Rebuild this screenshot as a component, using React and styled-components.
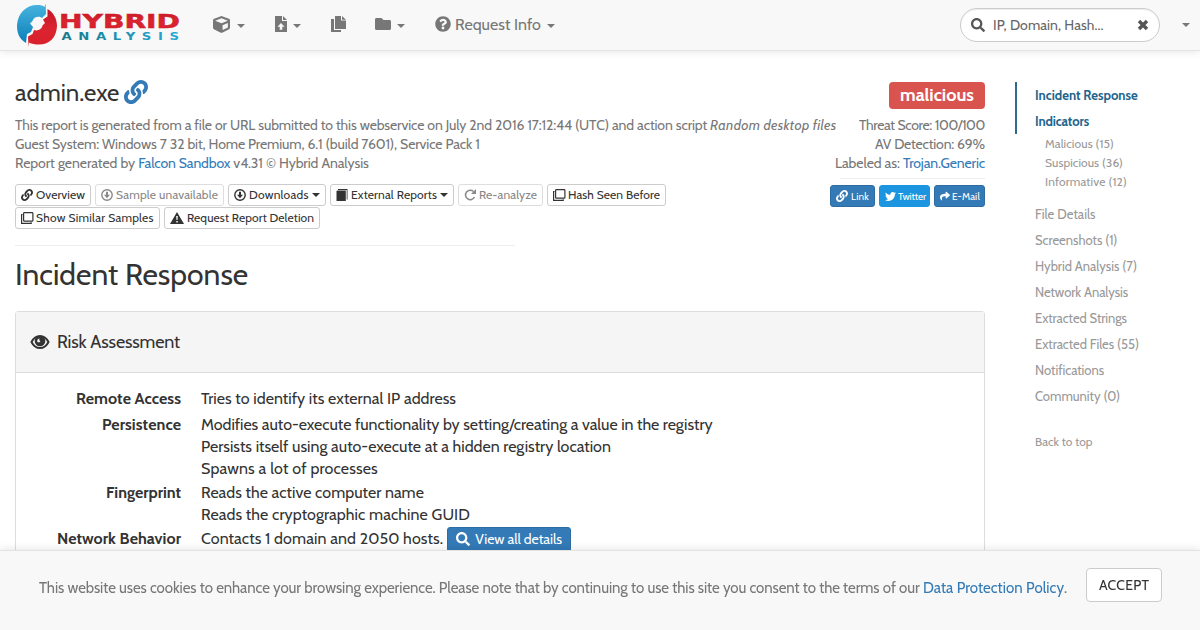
import React from 'react';
import styled, { createGlobalStyle, css } from 'styled-components';
import { FaCube, FaFolder, FaLink, FaQuestionCircle, FaSearch, FaTwitter, FaShare } from 'react-icons/fa';

const GlobalStyle = createGlobalStyle`
  * {
    box-sizing: border-box;
  }

  body {
    margin: 0;
    background: #fff;
    color: #333;
    font-family: Cabin, Lato, "Liberation Sans", sans-serif;
    font-size: 14px;
  }

  svg {
    display: block;
    flex: none;
  }
`;

const Text = styled.span`
  letter-spacing: ${props => props.$track || 0}px;
  white-space: nowrap;
`;

const Link = styled.a`
  color: #337ab7;
  letter-spacing: ${props => props.$track || 0}px;
  text-decoration: none;
  white-space: nowrap;
`;

const Caret = styled.span`
  width: 0;
  height: 0;
  border-top: 4px solid currentColor;
  border-left: 4px solid transparent;
  border-right: 4px solid transparent;
`;

/* ---------- Navbar ---------- */

const Navbar = styled.nav`
  display: flex;
  align-items: center;
  height: 51px;
  padding: 0 10px 0 15px;
  background: #f8f8f8;
  border-bottom: 1px solid #e3e3e3;
  box-shadow: 0 1px 8px rgba(0, 0, 0, 0.1);
  color: #777;
`;

const NavItems = styled.div`
  display: flex;
  align-items: center;
  flex: 1;
  height: 46px;
  margin: 0 0 2px 30px;
`;

const NavItem = styled.a`
  display: flex;
  align-items: center;
  gap: ${props => props.$gap || 7}px;
  margin-right: ${props => props.$after || 0}px;
  font-size: 16px;

  ${Caret} {
    margin-top: 4px;
  }

  ${Text} + ${Caret} {
    margin-left: 2px;
  }
`;

const SearchBox = styled.div`
  display: flex;
  align-items: center;
  width: 200px;
  height: 34px;
  margin-right: 22px;
  padding: 0 10px;
  background: #fff;
  border: 1px solid #ccc;
  border-radius: 17px;
  box-shadow: inset 0 1px 1px rgba(0, 0, 0, 0.075);
  color: #555;
`;

const SearchHint = styled(Text)`
  flex: 1;
  margin-left: 8px;
  color: #666;
`;

/* ---------- Page ---------- */

const Page = styled.main`
  display: grid;
  grid-template-columns: 970px 155px;
  column-gap: 30px;
  height: 579px;
  padding: 31px 15px 0;
  overflow: hidden;
`;

const Header = styled.header`
  display: flex;
  justify-content: space-between;
  height: 148px;
`;

const Summary = styled.div`
  flex: 1;
  min-width: 0;
`;

const FileName = styled.h2`
  display: flex;
  align-items: center;
  gap: 5px;
  height: 22px;
  margin: 0 0 12px;
  font-size: 24px;
  font-weight: 400;
  line-height: 22px;

  svg {
    margin-top: -2px;
    color: #337ab7;
  }
`;

const Meta = styled.div`
  color: #777;
  line-height: 19px;
  white-space: nowrap;
`;

const Toolbar = styled.div`
  display: flex;
  flex-wrap: wrap;
  gap: 1px 4px;
  width: 700px;
  margin-top: 11px;
`;

const Button = styled.button`
  display: flex;
  align-items: center;
  gap: ${props => props.$gap || 2}px;
  width: ${props => props.$width}px;
  height: 22px;
  padding: 0 5px;
  background: #fff;
  border: 1px solid #ccc;
  border-radius: 3px;
  color: #333;
  font: inherit;
  font-size: 12px;
  line-height: 18px;

  ${Caret} {
    margin-left: ${props => (props.$gap > 2 ? 0 : 1)}px;
  }

  ${props =>
    props.disabled &&
    css`
      border-color: #dedede;
      color: #888;
    `}
`;

const Verdict = styled.div`
  display: flex;
  flex-direction: column;
  align-items: flex-end;
  flex: none;
`;

const Badge = styled.div`
  width: 96px;
  height: 27px;
  margin-bottom: 7px;
  background: #d9534f;
  border-radius: 4px;
  color: #fff;
  font-size: 18px;
  font-weight: 700;
  line-height: 26px;
  text-align: center;
`;

const Divider = styled.div`
  width: ${props => props.$width}px;
  height: 1px;
  margin: ${props => props.$margin || 0};
  background: #eee;
`;

const ShareRow = styled.div`
  display: flex;
  gap: 4px;
`;

const ShareButton = styled(Button)`
  background: ${props => props.$bg || '#337ab7'};
  border-color: ${props => props.$bg || '#2e6da4'};
  color: #fff;
  font-size: 10px;

  ${Text} {
    padding-top: 1px;
  }
`;

const SectionTitle = styled.h1`
  margin: 10px 0 17px;
  font-size: 30px;
  font-weight: 400;
  letter-spacing: 0.04px;
  line-height: 38px;
`;

const Panel = styled.section`
  height: 319px;
  border: 1px solid #ddd;
  border-bottom: 0;
  border-radius: 4px 4px 0 0;
`;

const PanelHeading = styled.div`
  display: flex;
  align-items: center;
  gap: 7px;
  height: 61px;
  padding: 0 14px;
  background: #f5f5f5;
  border-bottom: 1px solid #ddd;
  font-size: 18px;
`;

const Findings = styled.dl`
  display: grid;
  grid-template-columns: 165px 1fr;
  column-gap: 20px;
  margin: 15px 0 0;
  font-size: 16px;
  line-height: 22px;
`;

const Term = styled.dt`
  font-weight: 700;
  text-align: right;
`;

const Detail = styled.dd`
  margin: 0 0 ${props => props.$after}px;

  div {
    display: flex;
    align-items: center;
    height: 22px;
  }
`;

const DetailsButton = styled(Button)`
  height: 25px;
  margin: 1px 0 0 4px;
  padding: 0 8px 2px;
  background: #337ab7;
  border-color: #2e6da4;
  color: #fff;
  font-size: 14px;
`;

/* ---------- Side navigation ---------- */

const SideNav = styled.aside`
  display: flex;
  flex-direction: column;
  color: #999;
  font-size: 13px;
`;

const SideItem = styled(Text)`
  height: 26px;
  padding-left: 20px;
  line-height: 26px;

  ${props =>
    props.$active &&
    css`
      padding-left: 18px;
      border-left: 2px solid #2f6b8f;
      color: #22658c;
      font-weight: 700;
    `}
`;

const SubItems = styled.div`
  display: flex;
  flex-direction: column;
  padding-left: 30px;
  margin-bottom: 10px;
  font-size: 12px;
  line-height: 19px;
`;

const BackToTop = styled(SideItem)`
  margin-top: 20px;
  font-size: 12px;
`;

/* ---------- Cookie notice ---------- */

const CookieBar = styled.footer`
  position: fixed;
  right: 0;
  bottom: 0;
  left: 0;
  display: flex;
  align-items: flex-start;
  height: 80px;
  padding: 17px 38px 0 39px;
  background: #f8f8f8;
  border-top: 1px solid #e3e3e3;
  box-shadow: 0 -1px 8px rgba(0, 0, 0, 0.1);
  color: #777;
  font-size: 15px;
`;

const CookieText = styled.p`
  flex: 1;
  margin: 8px 0 0;
  line-height: 24px;
  white-space: nowrap;
`;

const AcceptButton = styled(Button)`
  justify-content: center;
  height: 34px;
  border-radius: 4px;
  font-size: 14px;
`;

/* ---------- Drawings ---------- */

const Logo = () => (
  <svg width="168" height="48" viewBox="0 0 168 48">
    <defs>
      <linearGradient id="blue" x1="0" y1="0" x2="0" y2="1">
        <stop offset="0" stopColor="#48b4e0" />
        <stop offset="1" stopColor="#0d7fb8" />
      </linearGradient>
      <linearGradient id="red" x1="0" y1="0" x2="0" y2="1">
        <stop offset="0" stopColor="#c41528" />
        <stop offset="0.5" stopColor="#da2430" />
        <stop offset="1" stopColor="#d8202c" />
      </linearGradient>
      <linearGradient id="teal" x1="0" y1="0" x2="1" y2="0">
        <stop offset="0" stopColor="#187a8c" />
        <stop offset="1" stopColor="#25a8d8" />
      </linearGradient>
    </defs>
    <path d="M30.700 2.500L31 13L27 17C24 14.500 18.500 16 17.500 20L15 22.500L18 26L16 31L12 33L11 42C4 38 1.800 31 2 24C3 11 12 4 22 4C26 4 28 4.500 29.500 6Z" fill="url(#blue)" />
    <path d="M32.500 8C39 12 42 18 42 25C41.500 36 35 43.500 24 43.500C20 43.500 17 43 14 41.500L13.500 46L13 35.500L17.500 33L19 29C23 30.500 27 28 27.500 24.500L30 22L28 18.500L32.500 15.500Z" fill="url(#red)" />
    <text x="44" y="27" textLength="121" lengthAdjust="spacingAndGlyphs" fill="url(#red)" stroke="#cf1c2a" strokeWidth="0.500" fontFamily="DejaVu Sans" fontWeight="700" fontSize="19">HYBRID</text>
    <text transform="translate(46.500 38.500) scale(1.350 1)" textLength="87" lengthAdjust="spacing" fill="url(#teal)" fontFamily="DejaVu Sans" fontWeight="700" fontSize="9.800">ANALYSIS</text>
  </svg>
);

const FileUpIcon = () => (
  <svg width="12" height="16" viewBox="0 0 12 16" fill="currentColor">
    <path fillRule="evenodd" d="M0 0H7V5H12V16H0ZM6 7L2.500 10.700H4.700V13.700H7.300V10.700H9.500Z" />
    <path d="M8 0L12 4H8Z" />
  </svg>
);

const CopyIcon = () => (
  <svg width="15" height="16" viewBox="0 0 15 16" fill="currentColor">
    <path d="M4 0H10V4.500H15V13H4Z" />
    <path d="M11 0L15 3.700H11Z" />
    <path d="M0 3H3V14H10V16H0Z" />
  </svg>
);

const DownloadIcon = () => (
  <svg width="12" height="12" viewBox="0 0 12 12">
    <circle cx="6" cy="6" r="5.200" fill="none" stroke="currentColor" strokeWidth="1.400" />
    <path d="M5 2.800H7V5.800H9L6 9.200L3 5.800H5Z" fill="currentColor" />
  </svg>
);

const WindowsIcon = () => (
  <svg width="13" height="12" viewBox="0 0 13 12" fill="none" stroke="currentColor" strokeWidth="1.200">
    <rect x="2.600" y="0.600" width="9.300" height="8.600" rx="0.800" />
    <path d="M1.600 2.500H0.600V11.400H10.200V10.300" />
  </svg>
);

const BookIcon = () => (
  <svg width="12" height="12" viewBox="0 0 12 12" fill="currentColor">
    <path d="M2 0H11.500V10.500H10.700V1H2Z" />
    <path d="M0.500 2L1.500 1.500H9.800V12H0.500Z" />
  </svg>
);

const RedoIcon = () => (
  <svg width="13" height="12" viewBox="0 0 13 12">
    <path d="M9.500 2.500A4.700 4.700 0 1 0 10.500 8" fill="none" stroke="currentColor" strokeWidth="1.500" />
    <path d="M12 0V5H7Z" fill="currentColor" />
  </svg>
);

const WarningIcon = () => (
  <svg width="14" height="12" viewBox="0 0 14 12">
    <path d="M7 0L14 12H0Z" fill="currentColor" />
    <path d="M6.200 4H7.800L7.500 8H6.500ZM6.300 8.900H7.700V10.400H6.300Z" fill="#fff" />
  </svg>
);

const EyeIcon = () => (
  <svg width="20" height="16" viewBox="0 0 20 16">
    <path d="M1.500 8C3.500 4 6.500 1.900 10 1.900S16.500 4 18.500 8C16.500 12 13.500 14.100 10 14.100S3.500 12 1.500 8Z" fill="#f5f5f5" stroke="currentColor" strokeWidth="2" />
    <circle cx="10" cy="7" r="5.300" fill="currentColor" />
    <path d="M7.200 7.200C7.200 5.300 8.300 4.500 9.500 4.500C8.900 5.800 9.500 6.700 10.400 7.400C9.100 8.700 7.200 8.500 7.200 7.200Z" fill="#f5f5f5" />
  </svg>
);

const CrossIcon = () => (
  <svg width="12" height="12" viewBox="0 0 12 12" fill="none" stroke="currentColor" strokeWidth="3.400">
    <path d="M2 2L10 10M10 2L2 10" />
  </svg>
);

/* ---------- Data ---------- */

const actions = [
  { label: 'Overview', width: 76, track: 0.09, icon: <FaLink size={12} />, gap: 3 },
  { label: 'Sample unavailable', width: 129, track: 0.2, icon: <DownloadIcon />, gap: 3, disabled: true },
  { label: 'Downloads', width: 98, track: 0.25, icon: <DownloadIcon />, gap: 3, caret: true },
  { label: 'External Reports', width: 124, track: 0.16, icon: <BookIcon />, gap: 3, caret: true },
  { label: 'Re-analyze', width: 85, track: 0.11, icon: <RedoIcon />, disabled: true },
  { label: 'Hash Seen Before', width: 119, track: 0.09, icon: <WindowsIcon /> },
  { label: 'Show Similar Samples', width: 145, track: 0.24, icon: <WindowsIcon /> },
  { label: 'Request Report Deletion', width: 156, track: 0.11, icon: <WarningIcon />, gap: 3 },
];

const findings = [
  { term: 'Remote Access', track: 0.06, after: 4, lines: [['Tries to identify its external IP address', 0.06]] },
  {
    term: 'Persistence',
    track: 0.07,
    after: 2,
    lines: [
      ['Modifies auto-execute functionality by setting/creating a value in the registry', -0.02],
      ['Persists itself using auto-execute at a hidden registry location', 0.02],
      ['Spawns a lot of processes', 0.17],
    ],
  },
  {
    term: 'Fingerprint',
    after: 2,
    lines: [
      ['Reads the active computer name', 0.04],
      ['Reads the cryptographic machine GUID', 0.09],
    ],
  },
  { term: 'Network Behavior', track: 0.06, after: 0, details: true, lines: [['Contacts 1 domain and 2050 hosts.', 0.1]] },
];

const indicators = [
  ['Malicious (15)', 0.12],
  ['Suspicious (36)', 0.09],
  ['Informative (12)', 0.19],
];

const sections = [
  ['File Details', 0.05],
  ['Screenshots (1)'],
  ['Hybrid Analysis (7)'],
  ['Network Analysis', -0.05],
  ['Extracted Strings', -0.05],
  ['Extracted Files (55)', -0.03],
  ['Notifications'],
  ['Community (0)'],
];

const App = () => {
  return (
    <>
      <GlobalStyle />
      <Navbar>
        <Logo />
        <NavItems>
          <NavItem $after={30}>
            <FaCube size={17} />
            <Caret />
          </NavItem>
          <NavItem $after={30} $gap={6}>
            <FileUpIcon />
            <Caret />
          </NavItem>
          <NavItem $after={29}>
            <CopyIcon />
          </NavItem>
          <NavItem $after={30} $gap={6}>
            <FaFolder size={16} />
            <Caret />
          </NavItem>
          <NavItem $gap={4}>
            <FaQuestionCircle size={16} />
            <Text $track={0.05}>Request Info</Text>
            <Caret />
          </NavItem>
        </NavItems>
        <SearchBox>
          <FaSearch size={14} />
          <SearchHint $track={0.08}>IP, Domain, Hash...</SearchHint>
          <CrossIcon />
        </SearchBox>
        <Caret />
      </Navbar>

      <Page>
        <div>
          <Header>
            <Summary>
              <FileName>
                <Text $track={-0.05}>admin.exe</Text>
                <FaLink size={24} />
              </FileName>
              <Meta>
                <Text $track={-0.105}>
                  This report is generated from a file or URL submitted to this webservice on July 2nd 2016 17:12:44 (UTC) and action script{' '}
                </Text>
                <Text as="i" $track={0.32}>Random desktop files</Text>
              </Meta>
              <Meta>
                <Text $track={-0.1}>Guest System: Windows 7 32 bit, Home Premium, 6.1 (build 7601), Service Pack 1</Text>
              </Meta>
              <Meta>
                <Text $track={-0.03}>Report generated by </Text>
                <Link $track={-0.12}>Falcon Sandbox</Link>
                <Text $track={-0.07}> v4.31 © Hybrid Analysis</Text>
              </Meta>
              <Toolbar>
                {actions.map(action => (
                  <Button key={action.label} $width={action.width} $gap={action.gap} disabled={action.disabled}>
                    {action.icon}
                    <Text $track={action.track}>{action.label}</Text>
                    {action.caret && <Caret />}
                  </Button>
                ))}
              </Toolbar>
            </Summary>

            <Verdict>
              <Badge>
                <Text>malicious</Text>
              </Badge>
              <Meta>
                <Text $track={-0.33}>Threat Score: 100/100</Text>
              </Meta>
              <Meta>
                <Text $track={-0.17}>AV Detection: 69%</Text>
              </Meta>
              <Meta>
                <Text $track={-0.04}>Labeled as: </Text>
                <Link $track={-0.12}>Trojan.Generic</Link>
              </Meta>
              <Divider $width={145} $margin="5px 0 6px" />
              <ShareRow>
                <ShareButton $width={45} $gap={3}>
                  <FaLink size={12} />
                  <Text $track={0.15}>Link</Text>
                </ShareButton>
                <ShareButton $width={51} $bg="#1b95e0">
                  <FaTwitter size={11} />
                  <Text $track={-0.13}>Twitter</Text>
                </ShareButton>
                <ShareButton $width={51}>
                  <FaShare size={10} />
                  <Text $track={0.15}>E-Mail</Text>
                </ShareButton>
              </ShareRow>
            </Verdict>
          </Header>

          <Divider $width={500} $margin="15px 0 0" />
          <SectionTitle>Incident Response</SectionTitle>

          <Panel>
            <PanelHeading>
              <EyeIcon />
              <Text $track={-0.15}>Risk Assessment</Text>
            </PanelHeading>
            <Findings>
              {findings.map(item => (
                <React.Fragment key={item.term}>
                  <Term>
                    <Text $track={item.track}>{item.term}</Text>
                  </Term>
                  <Detail $after={item.after}>
                    {item.lines.map(([line, track]) => (
                      <div key={line}>
                        <Text $track={track}>{line}</Text>
                        {item.details && (
                          <DetailsButton $width={124} $gap={5}>
                            <FaSearch size={14} />
                            <Text $track={-0.05}>View all details</Text>
                          </DetailsButton>
                        )}
                      </div>
                    ))}
                  </Detail>
                </React.Fragment>
              ))}
            </Findings>
          </Panel>
        </div>

        <SideNav>
          <SideItem $active>Incident Response</SideItem>
          <SideItem $active $track={-0.12}>Indicators</SideItem>
          <SubItems>
            {indicators.map(([label, track]) => (
              <Text key={label} $track={track}>{label}</Text>
            ))}
          </SubItems>
          {sections.map(([label, track]) => (
            <SideItem key={label} $track={track}>{label}</SideItem>
          ))}
          <BackToTop $track={0.05}>Back to top</BackToTop>
        </SideNav>
      </Page>

      <CookieBar>
        <CookieText>
          <Text $track={-0.077}>
            This website uses cookies to enhance your browsing experience. Please note that by continuing to use this site you consent to the terms of our{' '}
          </Text>
          <Link $track={0.04}>Data Protection Policy</Link>.
        </CookieText>
        <AcceptButton $width={76}>
          <Text $track={0.25}>ACCEPT</Text>
        </AcceptButton>
      </CookieBar>
    </>
  );
};

export default App;
